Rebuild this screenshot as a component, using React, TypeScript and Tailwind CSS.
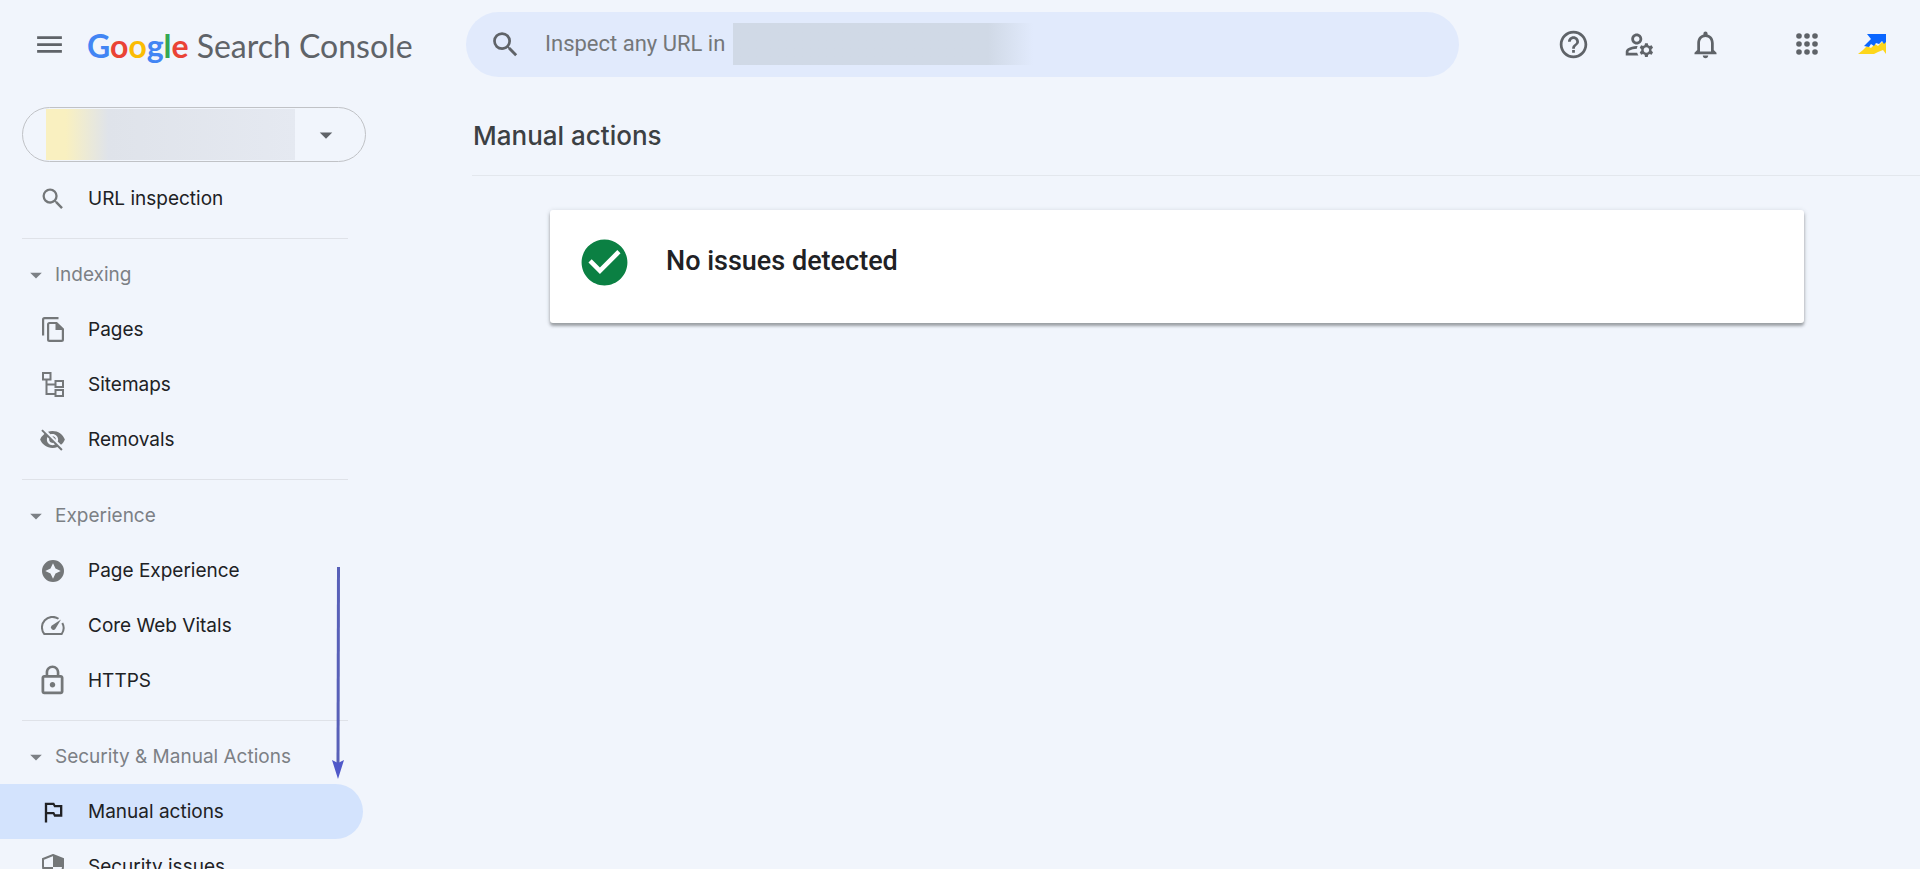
import React from "react";
import {
  MdMenu, MdSearch, MdHelpOutline, MdOutlineManageAccounts, MdNotificationsNone,
  MdCheckCircle, MdOutlinedFlag, MdLockOutline, MdVisibilityOff, MdArrowDropDown,
} from "react-icons/md";

const googleLetters = [
  { char: "G", color: "text-[#4285f4]" },
  { char: "o", color: "text-[#ea4335]" },
  { char: "o", color: "text-[#fbbc04]" },
  { char: "g", color: "text-[#4285f4]" },
  { char: "l", color: "text-[#34a853]" },
  { char: "e", color: "text-[#ea4335]" },
];

function PagesIcon() {
  return (
    <svg viewBox="0 0 22 25" className="h-[25px] w-[22px]" fill="none" stroke="currentColor" strokeWidth="2.200">
      <path d="M1.100 18.500V2.500Q1.100 1.100 2.500 1.100H16.500" />
      <path d="M6.100 7.500Q6.100 6 7.500 6H14.500L20.900 12.300V22.500Q20.900 23.900 19.500 23.900H7.500Q6.100 23.900 6.100 22.500Z" />
      <path d="M13.500 5.500V13H21.500Z" fill="currentColor" stroke="none" />
    </svg>
  );
}

function SitemapIcon() {
  return (
    <svg viewBox="0 0 22 25" className="h-[25px] w-[22px]" fill="none" stroke="currentColor" strokeWidth="2">
      <path d="M1 1H8.500V7.500H1ZM13.500 9H21V15H13.500ZM13.500 18H21V24H13.500ZM4.500 7.500V22H13.500M4.500 12.500H13.500" />
    </svg>
  );
}

function ExperienceIcon() {
  return (
    <svg viewBox="0 0 22 22" className="h-[22px] w-[22px]" fill="currentColor">
      <path fillRule="evenodd" d="M11 0a11 11 0 1 0 0 22a11 11 0 1 0 0-22ZM11 3.300L13.500 8.500L18.700 11L13.500 13.500L11 18.700L8.500 13.500L3.300 11L8.500 8.500Z" />
    </svg>
  );
}

function SpeedIcon() {
  return (
    <svg viewBox="0 0 24 20" className="h-[20px] w-[24px]" fill="none" stroke="currentColor" strokeWidth="2">
      <path d="M17.500 2.800A10.500 10.500 0 0 0 3.300 18H20.700A10.500 10.500 0 0 0 21.300 7" />
      <path d="M20 3.500L14.300 13A2.300 2.300 0 0 1 10.500 9.800Z" fill="currentColor" stroke="none" />
    </svg>
  );
}

function ShieldIcon() {
  return (
    <svg viewBox="0 0 22 26" className="h-[26px] w-[22px]">
      <path d="M11 1L21 5V12C21 18 17 23.500 11 25C5 23.500 1 18 1 12V5Z" fill="none" stroke="currentColor" strokeWidth="2" />
      <path d="M11 1L21 5V13H11ZM11 13V25C5 23.500 1 18 1 13Z" fill="currentColor" />
    </svg>
  );
}

function AppsIcon() {
  return (
    <svg viewBox="0 0 24 24" className="size-[24px]" fill="currentColor">
      {[4, 12, 20].map((y) => [4, 12, 20].map((x) => <circle key={`${x}-${y}`} cx={x} cy={y} r="2.800" />))}
    </svg>
  );
}

function AvatarIcon() {
  return (
    <svg viewBox="0 0 28 20" className="h-[20px] w-[28px]">
      <path d="M0 20L5 16L9 12L13 14L17 10L20 12L24 8L26 9L28 7V20L25 16L20 18L16 20Z" fill="#fdd61b" />
      <path d="M9 0H28V8L26 10L24 7L21 10L18 9L16 12L13 10L11 13L6 12L13 5Z" fill="#0a66ff" />
    </svg>
  );
}

const sections = [
  {
    title: "Indexing",
    items: [
      { label: "Pages", icon: <PagesIcon /> },
      { label: "Sitemaps", icon: <SitemapIcon /> },
      { label: "Removals", icon: <MdVisibilityOff size={27} /> },
    ],
  },
  {
    title: "Experience",
    items: [
      { label: "Page Experience", icon: <ExperienceIcon /> },
      { label: "Core Web Vitals", icon: <SpeedIcon /> },
      { label: "HTTPS", icon: <MdLockOutline size={33} /> },
    ],
  },
  {
    title: "Security & Manual Actions",
    items: [
      { label: "Manual actions", icon: <MdOutlinedFlag size={28} />, active: true },
      { label: "Security issues", icon: <ShieldIcon /> },
    ],
  },
];

function NavItem({ label, icon, active = false }: { label: string; icon: React.ReactNode; active?: boolean }) {
  return (
    <a
      href="#"
      aria-current={active ? "page" : undefined}
      className={`flex h-[55px] items-center rounded-r-full pl-[36px] text-[19px] text-[#202124] ${active ? "bg-[#d3e3fd]" : ""}`}
    >
      <span className={`flex w-[33px] justify-center ${active ? "text-[#202124]" : "text-[#747779]"}`}>{icon}</span>
      <span className="pt-[2px] pl-[19px]">{label}</span>
    </a>
  );
}

export default function App() {
  return (
    <div className="flex h-screen flex-col overflow-hidden bg-[#f1f5fc] font-['Inter',sans-serif] text-[#202124]">
      <header className="flex h-[88px] shrink-0 items-center text-[#5f6368]">
        <div className="flex w-[466px] shrink-0 items-center pl-[33px]">
          <button aria-label="Main menu"><MdMenu size={33} /></button>
          <a href="#" className="flex items-baseline gap-[8px] pt-[4px] pl-[21px] font-['Lato',sans-serif] text-[32px] leading-[40px]">
            <span className="font-bold">
              {googleLetters.map((l, i) => <span key={i} className={l.color}>{l.char}</span>)}
            </span>
            <span>Search Console</span>
          </a>
        </div>
        <label className="mr-[98px] flex h-[65px] min-w-0 flex-1 items-center rounded-full bg-[#e1eafc] pl-[23px]">
          <MdSearch size={33} className="shrink-0" />
          <input
            aria-label="Inspect any URL"
            placeholder="Inspect any URL in"
            className="ml-[23px] w-[188px] bg-transparent pb-[2px] font-['Roboto',sans-serif] text-[22px] outline-none placeholder:text-[#747779] placeholder:opacity-100"
          />
          <span className="h-[42px] w-[300px] bg-linear-to-r from-[#d0d9e6] from-85% to-[#e1eafc]" />
        </label>
        <div className="flex shrink-0 items-center gap-[33px]">
          <button aria-label="Help"><MdHelpOutline size={33} /></button>
          <button aria-label="User settings"><MdOutlineManageAccounts size={33} /></button>
          <button aria-label="Notifications"><MdNotificationsNone size={33} /></button>
        </div>
        <button aria-label="Google apps" className="ml-[73px]"><AppsIcon /></button>
        <button aria-label="Account" className="mr-[34px] ml-[39px]"><AvatarIcon /></button>
      </header>

      <div className="flex min-h-0 flex-1">
        <nav aria-label="Search Console" className="relative w-[363px] shrink-0">
          <div className="pt-[19px] pb-[9px] pl-[22px]">
            <button aria-label="Select property" className="flex h-[55px] w-[344px] items-center rounded-full border border-[#c0c2c6] pl-[23px] text-[#5f6368]">
              <span className="h-[51px] w-[249px] bg-linear-to-r from-[#f9f0c0] from-8% via-[#dfe3ea] via-25% to-[#e5e9f1]" />
              <MdArrowDropDown size={30} className="ml-[16px]" />
            </button>
          </div>
          <NavItem label="URL inspection" icon={<MdSearch size={28} />} />
          {sections.map((s) => (
            <section key={s.title}>
              <hr className="mt-[12px] mr-[15px] mb-[8px] ml-[22px] border-[#dfe2e8]" />
              <button className="flex h-[55px] w-full items-center pl-[22px] text-[19px] text-[#7c8085]">
                <MdArrowDropDown size={28} />
                <span className="pt-[2px] pl-[5px]">{s.title}</span>
              </button>
              {s.items.map((item) => <NavItem key={item.label} {...item} />)}
            </section>
          ))}
          <svg viewBox="0 0 12 212" className="absolute top-[479px] left-[332px] h-[212px] w-[12px]">
            <path d="M6.500 0L6 198" stroke="#5860b8" strokeWidth="3" />
            <path d="M0 193L6 196L12 193L6 212Z" fill="#5059c9" />
          </svg>
        </nav>

        <main className="ml-[109px] min-w-0 flex-1">
          <h1 className="flex h-[88px] items-center border-b border-[#e3e7ed] pt-[7px] pl-px text-[26px] font-medium text-[#3c4043]">
            Manual actions
          </h1>
          <div className="mt-[34px] mr-[116px] ml-[78px] flex h-[113px] items-center rounded-[3px] bg-white pb-[8px] pl-[27px] shadow-[0_3px_3px_rgba(60,64,67,0.4),0_1px_5px_rgba(60,64,67,0.2)]">
            <MdCheckCircle size={55} className="text-[#0b8043]" />
            <h2 className="pb-[2px] pl-[34px] font-['Roboto',sans-serif] text-[27px] font-medium">No issues detected</h2>
          </div>
        </main>
      </div>
    </div>
  );
}
